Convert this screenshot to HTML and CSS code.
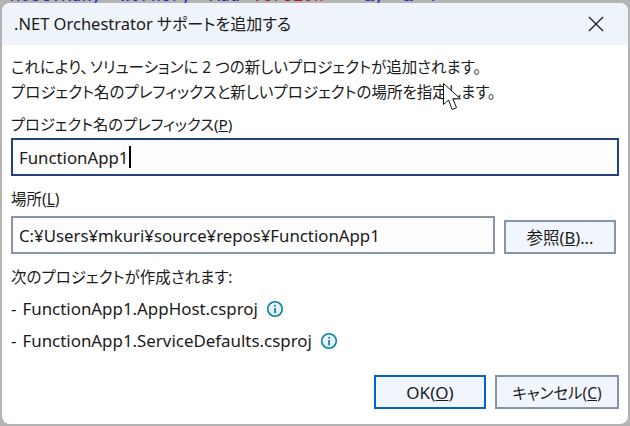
FILE: index.html
```html
<!DOCTYPE html>
<html lang="ja">
<head>
<meta charset="utf-8">
<title>.NET Orchestrator サポートを追加する</title>
<link rel="stylesheet" href="styles.css">
</head>
<body>
<div class="backdrop"><span class="blue">Host.Run; Worker; Add</span><span class="red">Version</span><span class="blue">= &amp;; &amp; /</span></div>
<main class="dialog">
  <header class="titlebar">
    <h1 class="title"><span class="latin">.NET Orchestrator</span> サポートを追加する</h1>
    <svg class="close" width="16" height="16" viewBox="0 0 16 16"><path d="M1 1 L15 15 M15 1 L1 15" stroke="#1a1a1a" stroke-width="1.3" fill="none"/></svg>
  </header>
  <section class="content">
    <p class="intro">これにより<span class="comma">、</span>ソリューションに 2 つの新しいプロジェクトが追加されます。<br>プロジェクト名のプレフィックスと新しいプロジェクトの場所を指定します。</p>
    <label class="label label-prefix">プロジェクト名のプレフィックス(<u>P</u>)</label>
    <div class="field field-focus"><span>FunctionApp1</span><i class="caret"></i></div>
    <label class="label label-place">場所(<u>L</u>)</label>
    <div class="row">
      <div class="field field-path"><span>C:¥Users¥mkuri¥source¥repos¥FunctionApp1</span></div>
      <button class="btn btn-browse">参照(<u>B</u>)...</button>
    </div>
    <p class="note">次のプロジェクトが作成されます:</p>
    <p class="item"><span class="dash">-</span><span>FunctionApp1.AppHost.csproj</span>
      <svg class="info" width="18" height="18" viewBox="0 0 18 18"><circle cx="9" cy="9" r="7.3" fill="#e6f2f7" stroke="#0b7ea6" stroke-width="1.6"/><rect x="8.2" y="8" width="1.7" height="5.2" fill="#0b7ea6"/><rect x="8.2" y="4.9" width="1.7" height="1.7" fill="#0b7ea6"/></svg>
    </p>
    <p class="item"><span class="dash">-</span><span>FunctionApp1.ServiceDefaults.csproj</span>
      <svg class="info" width="18" height="18" viewBox="0 0 18 18"><circle cx="9" cy="9" r="7.3" fill="#e6f2f7" stroke="#0b7ea6" stroke-width="1.6"/><rect x="8.2" y="8" width="1.7" height="5.2" fill="#0b7ea6"/><rect x="8.2" y="4.9" width="1.7" height="1.7" fill="#0b7ea6"/></svg>
    </p>
    <div class="actions">
      <button class="btn btn-ok">OK(<u>O</u>)</button>
      <button class="btn btn-cancel">キャンセル(<u>C</u>)</button>
    </div>
  </section>
</main>
<svg class="pointer" width="20" height="29" viewBox="0 0 20 29"><path d="M0.5 0.5 V21.5 L5.5 17 L9.2 26.5 L13.5 24.7 L9.8 15.8 L17.5 15.8 Z" fill="#fff" stroke="#111" stroke-width="1"/></svg>
</body>
</html>
```
FILE: styles.css
```css
* { box-sizing: border-box; }
html, body { margin: 0; height: 100%; }
body {
  width: 630px;
  height: 426px;
  padding: 3px 2px 2px 2px;
  background: #b4b4b4;
  overflow: hidden;
  position: relative;
  font-family: "Noto Sans", "Noto Sans CJK JP", sans-serif;
  font-feature-settings: "palt";
  font-size: 15.5px;
  color: #1a1a1a;
}
.backdrop {
  position: absolute;
  left: 0;
  top: -13px;
  width: 630px;
  white-space: nowrap;
  font: 17px "Liberation Mono", monospace;
  padding-left: 10px;
  word-spacing: 8px;
}
.blue { color: #2222cc; }
.red { color: #b01818; margin: 0 12px; }
.dialog {
  position: relative;
  width: 626px;
  height: 421px;
  background: #fff;
  border-radius: 8px;
  overflow: hidden;
  display: flex;
  flex-direction: column;
}
.titlebar {
  height: 42px;
  flex: none;
  background: #eff3fa;
  display: flex;
  align-items: center;
  justify-content: space-between;
  padding: 0 24px 0 12px;
}
.title { margin: 0; font-size: 16px; font-weight: 400; line-height: 22px; }
.latin { font-size: 16.5px; }
.content { padding: 0 9px; flex: 1; display: flex; flex-direction: column; }
p { margin: 0; }
.intro { margin-top: 10px; line-height: 25px; white-space: nowrap; font-size: 15.5px; }
.comma { margin-right: 2px; }
.label { display: block; line-height: 24px; }
.label-prefix { margin-top: 7px; font-size: 15.3px; }
.label-place { margin-top: 11px; }
.field {
  height: 38px;
  border: 2px solid #8a94a8;
  background: #fdfdfd;
  display: flex;
  align-items: center;
  padding-left: 6px;
  white-space: nowrap;
  font-size: 16.8px;
}
.field-focus {
  margin-top: 2px;
  width: 608px;
  border-color: #23417a;
}
.field-path { width: 484px; flex: none; }
.caret { width: 1.5px; height: 22px; background: #000; margin-left: 1px; }
.row { display: flex; align-items: flex-end; gap: 9px; margin-top: 5px; }
.btn {
  font: inherit;
  font-feature-settings: "palt";
  color: inherit;
  height: 34px;
  background: #f1f5fd;
  border: 2px solid #8a94a8;
  padding: 0;
  white-space: nowrap;
}
.btn-browse { width: 112px; font-size: 16.5px; }
.note { margin-top: 12px; line-height: 22px; }
.item { margin-top: 10px; line-height: 22px; display: flex; align-items: center; white-space: nowrap; font-size: 16.9px; }
.dash { margin-right: 6px; }
.info { margin-left: 8px; }
.actions { display: flex; justify-content: flex-end; gap: 9px; margin-top: auto; margin-bottom: 15px; }
.btn-ok { width: 112px; border-color: #0067c0; font-size: 17px; }
.btn-cancel { width: 124px; }
.pointer { position: absolute; left: 443px; top: 83px; }
```
